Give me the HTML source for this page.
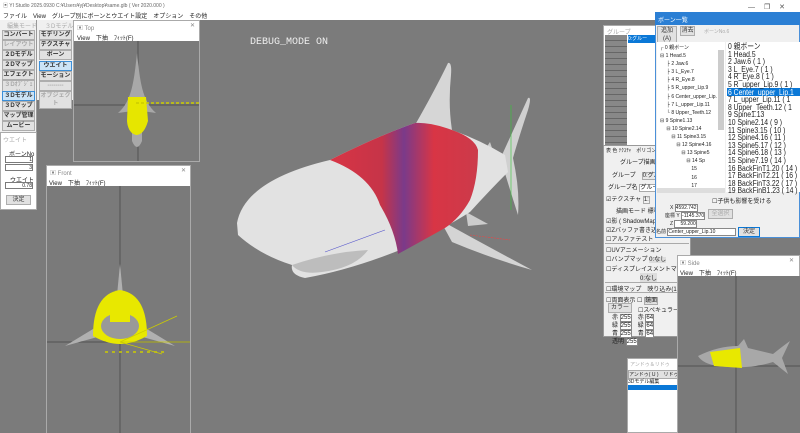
<!DOCTYPE html>
<html><head><meta charset="utf-8"><style>
*{margin:0;padding:0;box-sizing:border-box}
body{width:800px;height:433px;overflow:hidden;background:#7b7b7b;font-family:"Liberation Sans","Noto Sans CJK JP",sans-serif;font-size:6px;color:#222;position:relative}
.a{position:absolute}
.w{background:#fff}
.btn{position:absolute;background:#e1e1e1;border:1px solid #adadad;text-align:center;font-size:6px;line-height:8px;font-weight:bold;color:#333}
.sel{background:#cce4f7;border-color:#3c8fd8}
.dis{color:#aaa}
.vp{position:absolute;background:#7a7a7a}
.t{position:absolute;white-space:nowrap}
.in{position:absolute;background:#fff;border:1px solid #7a7a7a}
</style></head><body>
<div class="a w" style="left:0;top:0;width:800px;height:20px"></div>
<div class="t" style="left:3px;top:2px;color:#666;font-size:5px">▣ YI Studio 2025.0930 C:¥Users¥yj¥Desktop¥same.glb ( Ver 2020.000 )</div>
<div class="t" style="left:3px;top:11px;font-size:6px">ファイル　View　グループ別にボーンとウエイト設定　オプション　その他</div>
<div class="t" style="left:748px;top:2px;font-size:7px;color:#555">—　 ❐ 　✕</div>
<div class="a" style="left:0;top:20px;width:37px;height:112px;background:#f0f0f0;border-right:1px solid #999"></div>
<div class="t dis" style="left:7px;top:21px">編集モード</div>
<div class="btn" style="left:2px;top:30px;width:33px">コンバート</div>
<div class="btn dis" style="left:2px;top:40px;width:33px">レイアウト</div>
<div class="btn" style="left:2px;top:50px;width:33px">２Dモデル</div>
<div class="btn" style="left:2px;top:60px;width:33px">２Dマップ</div>
<div class="btn" style="left:2px;top:70px;width:33px">エフェクト</div>
<div class="btn dis" style="left:2px;top:80px;width:33px">３Dｵﾌﾞｼﾞｪｸﾄ</div>
<div class="btn sel" style="left:2px;top:91px;width:33px">３Dモデル</div>
<div class="btn" style="left:2px;top:101px;width:33px">３Dマップ</div>
<div class="btn" style="left:2px;top:111px;width:33px">マップ管理</div>
<div class="btn" style="left:2px;top:121px;width:33px">ムービー</div>
<div class="a" style="left:37px;top:20px;width:36px;height:80px;background:#f0f0f0"></div>
<div class="t dis" style="left:45px;top:21px">３Dモデル</div>
<div class="btn" style="left:39px;top:30px;width:33px">モデリング</div>
<div class="btn" style="left:39px;top:40px;width:33px">テクスチャ</div>
<div class="btn" style="left:39px;top:50px;width:33px">ボーン</div>
<div class="btn sel" style="left:39px;top:61px;width:33px">ウエイト</div>
<div class="btn" style="left:39px;top:71px;width:33px">モーション</div>
<div class="btn dis" style="left:39px;top:81px;width:33px">--------</div>
<div class="btn dis" style="left:39px;top:91px;width:33px">オブジェクト</div>
<div class="a" style="left:0;top:132px;width:37px;height:78px;background:#f0f0f0;border:1px solid #aaa"></div>
<div class="a w" style="left:1px;top:133px;width:35px;height:76px"></div>
<div class="t dis" style="left:3px;top:135px">ウエイト</div>
<div class="t" style="left:9px;top:149px">ボーンNo</div>
<div class="in" style="left:5px;top:156px;width:28px;height:7px;text-align:right;font-size:5px">1</div>
<div class="in" style="left:5px;top:164px;width:28px;height:7px;text-align:right;font-size:5px">3</div>
<div class="t" style="left:10px;top:175px">ウエイト</div>
<div class="in" style="left:5px;top:182px;width:28px;height:7px;text-align:right;font-size:5px">0.78</div>
<div class="btn" style="left:6px;top:195px;width:25px;font-weight:normal">決定</div>
<!-- Top window -->
<div class="a w" style="left:73px;top:20px;width:127px;height:142px;border:1px solid #aaa"></div>
<div class="t" style="left:77px;top:23px;color:#888">▣ Top</div><div class="t" style="left:190px;top:22px;color:#888">✕</div>
<div class="t" style="left:77px;top:33px">View　下抽　ﾌｨｯﾄ(F)</div>
<div class="vp" style="left:74px;top:41px;width:125px;height:120px"></div>
<svg class="a" style="left:74px;top:41px" width="125" height="120">
<line x1="64" y1="0" x2="64" y2="120" stroke="#444" stroke-width=".7"/><line x1="0" y1="64" x2="125" y2="64" stroke="#444" stroke-width=".7"/>
<path d="M63 12 C60 40 58 60 44 72 L58 70 L58 100 Q63 112 68 100 L68 70 L82 72 C68 60 66 40 63 12Z" fill="#a8a8a8"/>
<path d="M54 56 H72 L74 80 Q70 94 62 94 Q54 92 53 80Z" fill="#e6e600"/>
<path d="M62 62 H125" stroke="#cccc00" stroke-width="1.5" stroke-dasharray="3 2"/>
</svg>
<!-- Front window -->
<div class="a w" style="left:46px;top:165px;width:145px;height:268px;border:1px solid #aaa"></div>
<div class="t" style="left:50px;top:168px;color:#888">▣ Front</div><div class="t" style="left:181px;top:167px;color:#888">✕</div>
<div class="t" style="left:49px;top:178px">View　下抽　ﾌｨｯﾄ(F)</div>
<div class="vp" style="left:47px;top:186px;width:143px;height:247px"></div>
<svg class="a" style="left:47px;top:186px" width="143" height="247">
<line x1="73" y1="0" x2="73" y2="247" stroke="#444" stroke-width=".7"/><line x1="0" y1="156" x2="143" y2="156" stroke="#444" stroke-width=".7"/>
<path d="M73 78 L78 130 L73 135 L68 130Z" fill="#b0b0b0"/>
<path d="M95 140 L128 160 L92 150Z M51 140 L18 160 L54 150Z" fill="#b0b0b0"/>
<path d="M46 150 Q46 108 73 104 Q100 108 100 150 Q86 158 73 158 Q60 158 46 150Z" fill="#e8e800"/>
<ellipse cx="73" cy="140" rx="19" ry="13" fill="#999"/>
<rect x="63" y="126" width="20" height="10" fill="#e8e800"/>
<path d="M73 156 L130 130 M73 156 L143 156 M73 156 L115 168" stroke="#cccc00" stroke-width=".8"/>
<path d="M58 166 H120" stroke="#cccc00" stroke-width="1.5" stroke-dasharray="3 4"/>
</svg>
<!-- main viewport -->
<div class="t" style="left:250px;top:37px;font-family:'Liberation Mono',monospace;font-size:10px;color:#eee">DEBUG_MODE ON</div>
<svg class="a" style="left:230px;top:30px" width="370" height="320">
<defs><linearGradient id="g" x1="0" x2="1"><stop offset="0" stop-color="#d83545"/><stop offset=".35" stop-color="#c63448"/><stop offset=".5" stop-color="#7a3a8a"/><stop offset=".7" stop-color="#d83545"/><stop offset="1" stop-color="#cc3a4a"/></linearGradient></defs>
<path d="M185 95 Q205 60 218 33 Q222 32 221 45 Q218 75 222 100Z" fill="#d6d6d6"/>
<path d="M272 125 Q288 90 298 68 Q302 66 298 80 Q288 110 283 128 Q290 160 288 185 Q280 160 274 140Z" fill="#d0d0d0"/>
<path d="M210 190 Q255 215 302 240 Q260 228 222 212Z" fill="#d4d4d4"/>
<path d="M236 182 L258 194 L238 196Z" fill="#ccc"/>
<path d="M260 112 L262 118 L256 118Z" fill="#ccc"/>
<path d="M7 193 Q15 150 100 130 Q150 105 185 93 L222 100 Q250 110 275 125 L278 142 Q260 160 240 182 Q215 198 170 220 Q120 240 75 248 Q60 245 62 235 Q30 225 8 205Z" fill="#e2e2e2"/>
<path d="M100 130 Q150 105 185 93 Q200 92 222 100 Q245 108 248 120 Q248 150 240 170 Q230 188 215 198 Q190 212 168 224 Q165 200 150 175 Q140 145 100 130Z" fill="url(#g)"/>
<path d="M62 235 Q100 222 138 220 Q125 238 92 242 Q70 245 62 235Z" fill="#bdbdbd"/>
<line x1="281" y1="75" x2="281" y2="180" stroke="#3c3" stroke-width=".6"/>
<line x1="95" y1="222" x2="155" y2="200" stroke="#55c" stroke-width=".6"/>
<line x1="240" y1="205" x2="280" y2="210" stroke="#e44" stroke-width=".6" stroke-dasharray="2 1"/>
</svg>
<!-- group panel -->
<div class="a w" style="left:603px;top:25px;width:55px;height:125px;border:1px solid #aaa"></div>
<div class="t dis" style="left:607px;top:27px">グループ</div>
<div class="a" style="left:605px;top:35px;width:22px;height:113px;background:repeating-linear-gradient(#888 0 5px,#666 5px 6px)"></div>
<div class="a" style="left:628px;top:35px;width:28px;height:8px;background:#0a78d7;color:#fff;font-size:5px">0:グルー</div>
<!-- material panel -->
<div class="a" style="left:603px;top:145px;width:88px;height:192px;background:#f0f0f0;border:1px solid #999"></div>
<div class="t" style="left:606px;top:147px;font-size:5px">表 色 ﾃｸｽﾁｬ　ポリゴン</div>
<div class="t" style="left:620px;top:157px">グループ描画の</div>
<div class="t" style="left:612px;top:170px">グループ　<span style="border:1px solid #aaa;background:#e8e8e8">0:グル</span></div>
<div class="t" style="left:608px;top:182px">グループ名 <span style="border:1px solid #aaa;background:#fff">グルー</span></div>
<div class="t" style="left:606px;top:194px">☑テクスチャ <span style="border:1px solid #aaa">1:</span></div>
<div class="t" style="left:616px;top:206px">描画モード 標準</div>
<div class="t" style="left:606px;top:216px">☑影 ( ShadowMap用</div>
<div class="t" style="left:606px;top:225px">☑Zバッファ書き込み</div>
<div class="t" style="left:606px;top:234px">☐アルファテスト</div>
<div class="a" style="left:605px;top:243px;width:84px;border-top:1px solid #aaa"></div>
<div class="t" style="left:606px;top:245px">☐UVアニメーション</div>
<div class="t" style="left:606px;top:254px">☐バンプマップ <span style="background:#ddd">0:なし</span></div>
<div class="t" style="left:606px;top:264px">☐ディスプレイスメントマップ</div>
<div class="t" style="left:640px;top:273px;background:#ddd">0:なし</div>
<div class="a" style="left:605px;top:282px;width:84px;border-top:1px solid #aaa"></div>
<div class="t" style="left:606px;top:284px">☐環境マップ　映り込み(1.0)</div>
<div class="a" style="left:605px;top:292px;width:84px;border-top:1px solid #aaa"></div>
<div class="t" style="left:606px;top:295px">☐両面表示 ☐ <span style="border:1px solid #aaa;background:#e1e1e1">鏡面</span></div>
<div class="btn" style="left:608px;top:303px;width:24px;font-weight:normal">カラー</div>
<div class="t" style="left:638px;top:305px">☐スペキュラー</div>
<div class="t" style="left:612px;top:314px;line-height:8px">赤 <span style="border:1px solid #888;background:#fff">255</span>　赤 <span style="border:1px solid #888;background:#fff">64</span><br>緑 <span style="border:1px solid #888;background:#fff">255</span>　緑 <span style="border:1px solid #888;background:#fff">64</span><br>青 <span style="border:1px solid #888;background:#fff">255</span>　青 <span style="border:1px solid #888;background:#fff">64</span><br>透明 <span style="border:1px solid #888;background:#fff">255</span></div>
<!-- undo window -->
<div class="a w" style="left:627px;top:358px;width:52px;height:75px;border:1px solid #aaa"></div>
<div class="t dis" style="left:630px;top:361px;font-size:5px">アンドゥ＆リドゥ</div>
<div class="t" style="left:628px;top:370px;font-size:5px;background:#e1e1e1;border:1px solid #aaa">アンドゥ( U )　リドゥ</div>
<div class="t" style="left:628px;top:378px;font-size:5px">3Dモデル編集</div>
<div class="a" style="left:628px;top:385px;width:50px;height:5px;background:#0a78d7"></div>
<!-- bone list window -->
<div class="a" style="left:655px;top:12px;width:145px;height:226px;background:#f0f0f0;border:1px solid #4a90d9"></div>
<div class="a" style="left:655px;top:12px;width:145px;height:13px;background:#2b7fd4"></div>
<div class="t" style="left:658px;top:15px;color:#fff">ボーン一覧</div>
<div class="btn" style="left:657px;top:26px;width:20px;font-weight:normal">追加(A)</div>
<div class="btn" style="left:680px;top:26px;width:15px;font-weight:normal">消去</div>
<div class="t dis" style="left:704px;top:28px;font-size:5px">ボーンNo.6</div>
<div class="a w" style="left:657px;top:42px;width:68px;height:150px"></div>
<div class="a" style="left:718px;top:50px;width:6px;height:80px;background:#ccc"></div>
<div class="t" style="left:660px;top:44px;font-size:5px;line-height:8.1px">┌ 0 親ボーン<br>⊟ 1 Head.5<br>　 ├ 2 Jaw.6<br>　 ├ 3 L_Eye.7<br>　 ├ 4 R_Eye.8<br>　 ├ 5 R_upper_Lip.9<br>　 ├ 6 Center_upper_Lip.<br>　 ├ 7 L_upper_Lip.11<br>　 └ 8 Upper_Teeth.12<br>⊟ 9 Spine1.13<br>　 ⊟ 10 Spine2.14<br>　　 ⊟ 11 Spine3.15<br>　　　 ⊟ 12 Spine4.16<br>　　　　 ⊟ 13 Spine5<br>　　　　　 ⊟ 14 Sp<br>　　　　　　 15<br>　　　　　　 16<br>　　　　　　 17</div>
<div class="a" style="left:657px;top:188px;width:68px;height:5px;background:#ddd"></div>
<div class="a w" style="left:726px;top:42px;width:74px;height:150px;overflow:hidden"></div>
<div class="a" style="left:727px;top:88px;width:73px;height:8px;background:#0a78d7"></div>
<div class="t" style="left:728px;top:43px;font-size:8px;line-height:7.6px;transform:scaleX(.85);transform-origin:left">0 親ボーン<br>1 Head.5<br>2 Jaw.6 ( 1 )<br>3 L_Eye.7 ( 1 )<br>4 R_Eye.8 ( 1 )<br>5 R_upper_Lip.9 ( 1 )<br><span style="color:#fff">6 Center_upper_Lip.1</span><br>7 L_upper_Lip.11 ( 1<br>8 Upper_Teeth.12 ( 1<br>9 Spine1.13<br>10 Spine2.14 ( 9 )<br>11 Spine3.15 ( 10 )<br>12 Spine4.16 ( 11 )<br>13 Spine5.17 ( 12 )<br>14 Spine6.18 ( 13 )<br>15 Spine7.19 ( 14 )<br>16 BackFinT1.20 ( 14 )<br>17 BackFinT2.21 ( 16 )<br>18 BackFinT3.22 ( 17 )<br>19 BackFinB1.23 ( 14 )</div>
<div class="t" style="left:712px;top:196px">☐子供も影響を受ける</div>
<div class="t" style="left:665px;top:204px;font-size:5px;line-height:8px">　X <span style="border:1px solid #888;background:#fff">4592.742</span><br>座標 Y <span style="border:1px solid #888;background:#fff">-1145.370</span><br>　Z <span style="border:1px solid #888;background:#fff">　59.200</span></div>
<div class="btn dis" style="left:708px;top:209px;width:25px;font-weight:normal">全選択</div>
<div class="t" style="left:656px;top:228px;font-size:5px">名前 <span style="border:1px solid #888;background:#fff;padding-right:20px">Center_upper_Lip.10</span></div>
<div class="btn" style="left:738px;top:227px;width:22px;font-weight:normal;border-color:#0a78d7">決定</div>
<!-- Side window -->
<div class="a w" style="left:677px;top:255px;width:123px;height:178px;border:1px solid #aaa"></div>
<div class="t" style="left:680px;top:258px;color:#888">▣ Side</div><div class="t" style="left:789px;top:257px;color:#888">✕</div>
<div class="t" style="left:680px;top:268px">View　下抽　ﾌｨｯﾄ(F)</div>
<div class="vp" style="left:678px;top:276px;width:122px;height:157px"></div>
<svg class="a" style="left:678px;top:276px" width="122" height="157">
<line x1="58" y1="0" x2="58" y2="157" stroke="#444" stroke-width=".7"/><line x1="0" y1="90" x2="122" y2="90" stroke="#444" stroke-width=".7"/>
<path d="M20 80 Q40 70 60 70 L66 63 L70 72 L95 78 Q105 70 112 65 L104 82 L110 98 L95 86 Q70 94 40 90 Q25 88 20 80Z" fill="#a8a8a8"/>
<path d="M32 76 L62 72 L64 92 L36 90Z" fill="#e8e800"/>
</svg>
</body></html>
